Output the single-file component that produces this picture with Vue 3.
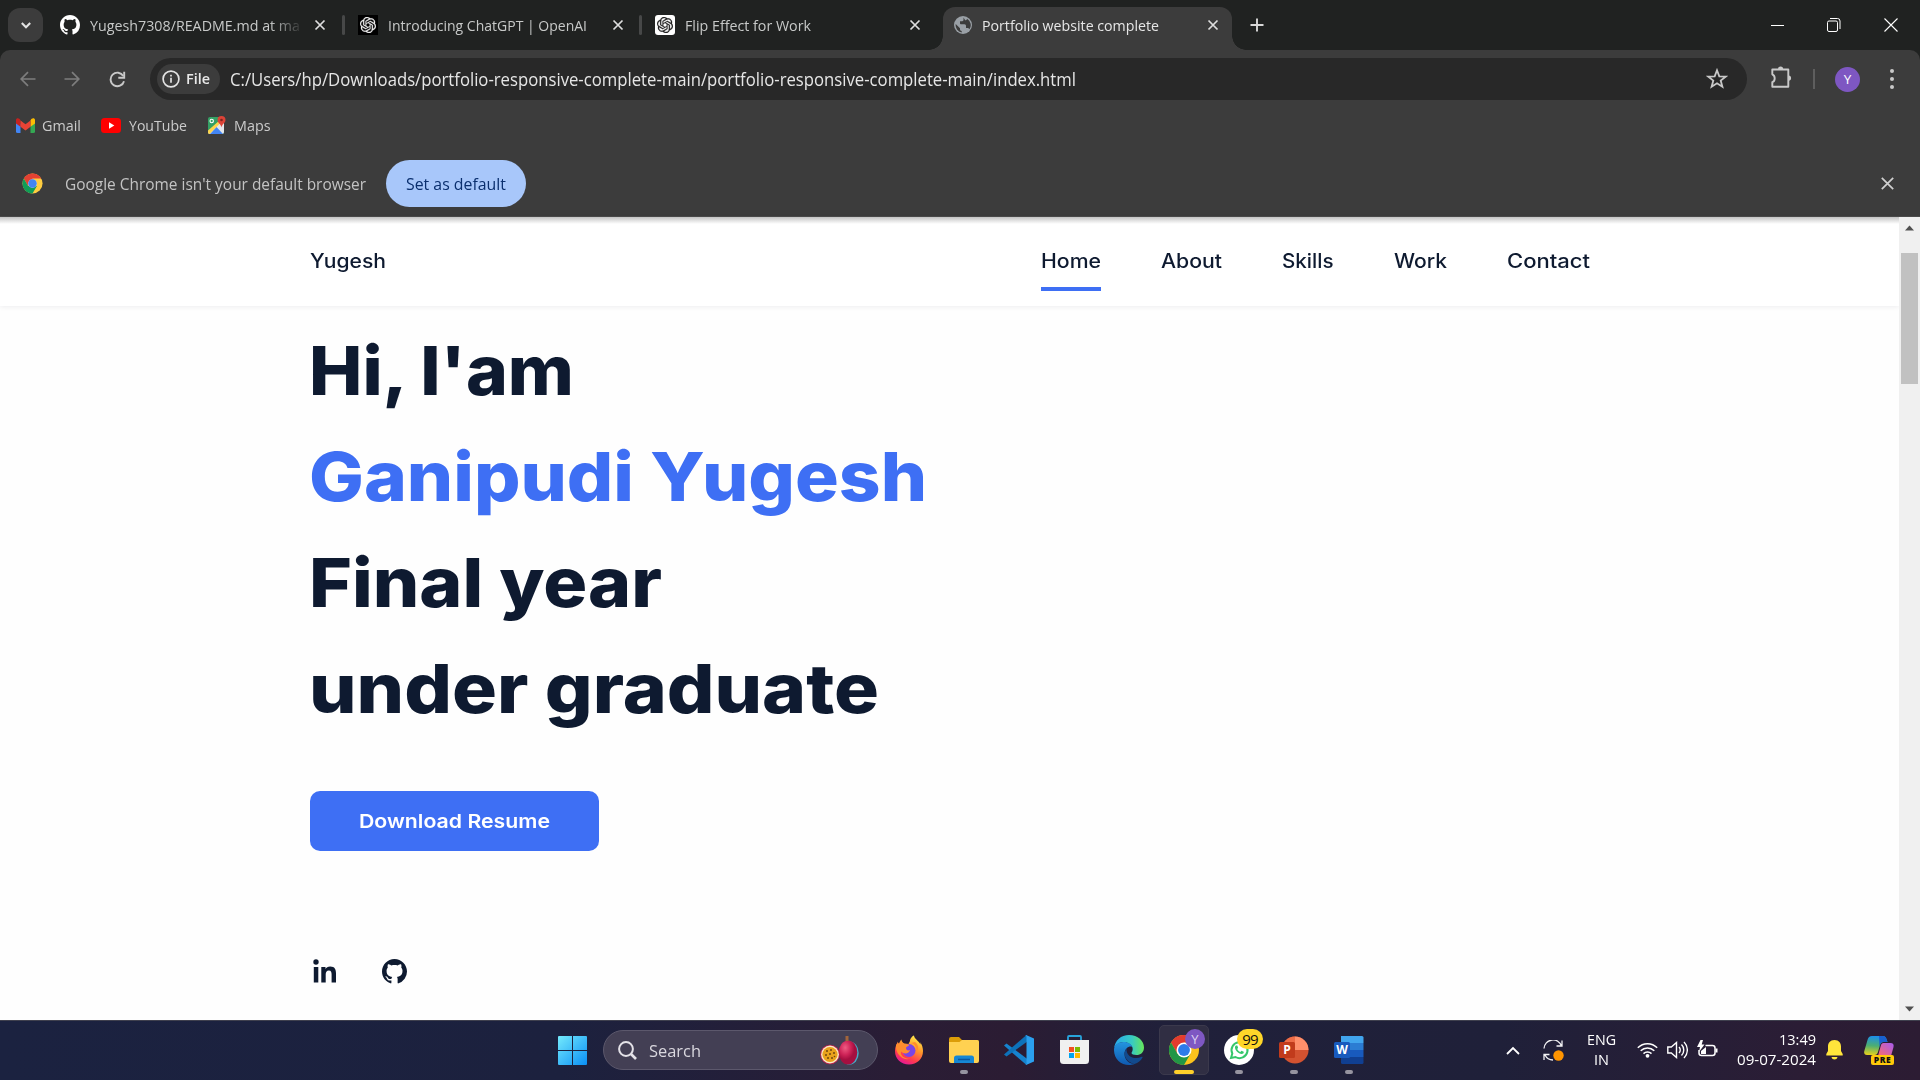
<script setup>
const github =
  'M8 0C3.58 0 0 3.58 0 8c0 3.54 2.29 6.53 5.47 7.59.4.07.55-.17.55-.38 0-.19-.01-.82-.01-1.49-2.01.37-2.53-.49-2.69-.94-.09-.23-.48-.94-.82-1.13-.28-.15-.68-.52-.01-.53.63-.01 1.08.58 1.23.82.72 1.21 1.87.87 2.33.66.07-.52.28-.87.51-1.07-1.78-.2-3.64-.89-3.64-3.95 0-.87.31-1.59.82-2.15-.08-.2-.36-1.02.08-2.12 0 0 .67-.21 2.2.82.64-.18 1.32-.27 2-.27s1.36.09 2 .27c1.53-1.04 2.2-.82 2.2-.82.44 1.1.16 1.92.08 2.12.51.56.82 1.27.82 2.15 0 3.07-1.87 3.75-3.65 3.95.29.25.54.73.54 1.48 0 1.07-.01 1.93-.01 2.2 0 .21.15.46.55.38A8.01 8.01 0 0 0 16 8c0-4.42-3.58-8-8-8z'
const openai =
  'M22.2819 9.8211a5.9847 5.9847 0 0 0-.5157-4.9108 6.0462 6.0462 0 0 0-6.5098-2.9A6.0651 6.0651 0 0 0 4.9807 4.1818a5.9847 5.9847 0 0 0-3.9977 2.9 6.0462 6.0462 0 0 0 .7427 7.0966 5.98 5.98 0 0 0 .511 4.9107 6.051 6.051 0 0 0 6.5146 2.9001A5.9847 5.9847 0 0 0 13.2599 24a6.0557 6.0557 0 0 0 5.7718-4.2058 5.9894 5.9894 0 0 0 3.9977-2.9001 6.0557 6.0557 0 0 0-.7475-7.0729zm-9.022 12.6081a4.4755 4.4755 0 0 1-2.8764-1.0408l.1419-.0804 4.7783-2.7582a.7948.7948 0 0 0 .3927-.6813v-6.7369l2.02 1.1686a.071.071 0 0 1 .038.052v5.5826a4.504 4.504 0 0 1-4.4945 4.4944zm-9.6607-4.1254a4.4708 4.4708 0 0 1-.5346-3.0137l.142.0852 4.783 2.7582a.7712.7712 0 0 0 .7806 0l5.8428-3.3685v2.3324a.0804.0804 0 0 1-.0332.0615L9.74 19.9502a4.4992 4.4992 0 0 1-6.1408-1.6464zM2.3408 7.8956a4.485 4.485 0 0 1 2.3655-1.9728V11.6a.7664.7664 0 0 0 .3879.6765l5.8144 3.3543-2.0201 1.1685a.0757.0757 0 0 1-.071 0l-4.8303-2.7865A4.504 4.504 0 0 1 2.3408 7.872zm16.5963 3.8558L13.1038 8.364 15.1192 7.2a.0757.0757 0 0 1 .071 0l4.8303 2.7913a4.4944 4.4944 0 0 1-.6765 8.1042v-5.6772a.79.79 0 0 0-.407-.667zm2.0107-3.0231l-.142-.0852-4.7735-2.7818a.7759.7759 0 0 0-.7854 0L9.409 9.2297V6.8974a.0662.0662 0 0 1 .0284-.0615l4.8303-2.7866a4.4992 4.4992 0 0 1 6.6802 4.66zM8.3065 12.863l-2.02-1.1638a.0804.0804 0 0 1-.038-.0567V6.0742a4.4992 4.4992 0 0 1 7.3757-3.4537l-.142.0805L8.704 5.459a.7948.7948 0 0 0-.3927.6813zm1.0976-2.3654l2.602-1.4998 2.6069 1.4998v2.9994l-2.5974 1.4997-2.6067-1.4997Z'

const tabs = [
  { title: 'Yugesh7308/README.md at ma', width: 210, icon: 'github', fade: true },
  { title: 'Introducing ChatGPT | OpenAI', width: 199, icon: 'gpt-dark' },
  { title: 'Flip Effect for Work', width: 126, icon: 'gpt-light' },
  { title: 'Portfolio website complete', width: 177, icon: 'globe', active: true },
]
const nav = [
  { label: 'Home', width: 60 },
  { label: 'About', width: 61 },
  { label: 'Skills', width: 51.5 },
  { label: 'Work', width: 53 },
  { label: 'Contact', width: 83 },
]
const headline = [
  { text: "Hi, I'am", width: 265 },
  { text: 'Ganipudi Yugesh', width: 618, accent: true },
  { text: 'Final year', width: 353 },
  { text: 'under graduate', width: 570 },
]

// Stretches a single line of text so that it spans the given width in pixels.
const vSpan = {
  mounted(el, { value }) {
    const range = document.createRange()
    range.selectNodeContents(el)
    const natural = range.getBoundingClientRect().width
    el.style.width = `${value}px`
    el.style.transform = `scaleX(${value / natural})`
  },
}
</script>

<template>
  <div class="screen">
    <div class="tabstrip">
      <div class="tabsearch">
        <svg width="12" height="12" viewBox="0 0 12 12"><path d="M1.800 4l4.200 4.200L10.200 4" fill="none" stroke="#e3e3e3" stroke-width="2.100" /></svg>
      </div>
      <div v-for="(t, i) in tabs" :key="i" class="tab" :class="{ active: t.active, divided: i < 2 }">
        <span class="favicon" :class="t.icon">
          <svg v-if="t.icon === 'github'" width="20" height="20" viewBox="0 0 16 16"><path :d="github" fill="#fff" /></svg>
          <svg v-else-if="t.icon === 'globe'" width="18" height="18" viewBox="0 0 18 18">
            <circle cx="9" cy="9" r="9" fill="#9aa0a6" />
            <path d="M9.5 1.5v2.2c0 1-1 1.5-2 1.5H6v2c0 .8.5 1 1.200 1h3.200c1.200 0 1.600.8 1.600 1.800v2h1.500c.9 0 1.600.6 2 1.300A7.400 7.400 0 0 0 13 2.700c-.2.9-.8 1.600-1.800 1.600zM1.700 8l4.300 4.200v1c0 1 .7 1.700 1.700 1.800v1.500A7.500 7.500 0 0 1 1.700 8z" fill="#3c3c3c" />
          </svg>
          <svg v-else width="16" height="16" viewBox="0 0 24 24"><path :d="openai" fill="currentColor" stroke="currentColor" stroke-width=".4" /></svg>
        </span>
        <span class="tabtitle" :class="{ fade: t.fade }"><span v-span="t.width" class="line">{{ t.title }}</span></span>
        <svg class="tabclose" width="12" height="12" viewBox="0 0 12 12"><path d="M1.500 1.500l9 9M10.500 1.500l-9 9" stroke="#dedede" stroke-width="1.700" /></svg>
      </div>
      <svg class="plus" width="14" height="14" viewBox="0 0 14 14"><path d="M7 .5v13M.5 7h13" stroke="#d8d8d8" stroke-width="1.900" /></svg>
      <div class="winctl">
        <svg width="14" height="14" viewBox="0 0 14 14"><path d="M0 7.500h13" stroke="#fff" /></svg>
        <svg width="14" height="14" viewBox="0 0 14 14" fill="none" stroke="#fff"><rect x=".5" y="3" width="10" height="10.500" rx="1.500" /><path d="M3 .5h7.500a2.500 2.500 0 0 1 2.500 2.500v8" /></svg>
        <svg width="14" height="14" viewBox="0 0 14 14"><path d="M.5.5l13 13M13.500.5l-13 13" stroke="#fff" stroke-width="1.100" /></svg>
      </div>
    </div>

    <div class="chrome">
      <div class="toolbar">
        <svg width="16" height="16" viewBox="0 0 16 16" fill="none" stroke="#7d7d7d" stroke-width="1.700"><path d="M15.500 8H1.500M8 1.200L1.200 8 8 14.800" /></svg>
        <svg width="16" height="16" viewBox="0 0 16 16" fill="none" stroke="#7d7d7d" stroke-width="1.700"><path d="M.5 8h14M8 1.200L14.800 8 8 14.800" /></svg>
        <svg width="17" height="17" viewBox="0 0 17 17"><path d="M14.300 5A6.800 6.800 0 1 0 15 10.200" fill="none" stroke="#c9c9c9" stroke-width="1.900" /><path d="M15.200.8v5.900H9.300" fill="none" stroke="#c9c9c9" stroke-width="1.900" /></svg>
        <div class="omnibox">
          <div class="chip">
            <svg width="18" height="18" viewBox="0 0 18 18"><circle cx="9" cy="9" r="7.900" fill="none" stroke="#e3e3e3" stroke-width="1.700" /><path d="M9 7.800v5M9 4.700v1.800" stroke="#e3e3e3" stroke-width="1.700" /></svg>
            <span v-span="24" class="line">File</span>
          </div>
          <span v-span="846" class="line url">C:/Users/hp/Downloads/portfolio-responsive-complete-main/portfolio-responsive-complete-main/index.html</span>
          <svg class="star" width="22" height="22" viewBox="0 0 22 22"><path d="M11 2.300l2.300 6 6.400.3-5 4 1.700 6.200-5.400-3.500-5.400 3.500 1.700-6.200-5-4 6.400-.3z" fill="none" stroke="#c9c9c9" stroke-width="1.800" /></svg>
        </div>
        <svg class="puzzle" width="22" height="24" viewBox="0 0 22 24"><path d="M2.300 4.500h16v17.200H2.300v-4.500c1.600-.5 2.400-2 2.400-3.900S3.900 10 2.300 9.300z" fill="none" stroke="#c9c9c9" stroke-width="1.900" stroke-linejoin="round" /><path d="M8 4a2.600 2.600 0 0 1 5.200 0zM18.500 10.500a2.600 2.600 0 0 1 0 5.200z" fill="#c9c9c9" /></svg>
        <span class="bar"></span>
        <span class="avatar">Y</span>
        <span class="dots"><i></i><i></i><i></i></span>
      </div>

      <div class="bookmarks">
        <svg width="19" height="15" viewBox="0 0 19 15"><path d="M0 3v10.500Q0 15 1.500 15h3V6z" fill="#4285f4" /><path d="M19 3v10.500q0 1.500-1.500 1.500h-3V6z" fill="#34a853" /><path d="M0 2v3.500l4.500 3.200V2.500C3.500-.5 0-.3 0 2z" fill="#c5221f" /><path d="M19 2v3.500l-4.500 3.200V2.500C15.500-.5 19-.3 19 2z" fill="#fbbc04" /><path d="M4.500 2.500v6.200l5 3.800 5-3.800V2.500l-5 3.800z" fill="#ea4335" /></svg>
        <span v-span="39" class="line gmail">Gmail</span>
        <svg width="20" height="15" viewBox="0 0 20 15"><rect width="20" height="15" rx="3.500" fill="#f00" /><path d="M8 4.300v6.400l5.300-3.200z" fill="#fff" /></svg>
        <span v-span="58" class="line youtube">YouTube</span>
        <svg width="18" height="18" viewBox="0 0 18 18"><rect y="1" width="16" height="17" rx="2" fill="#34a064" /><path d="M0 16L8 9l8-7v14q0 2-2 2H2q-2 0-2-2z" fill="#e4e6ea" /><path d="M2 18l6.500-7 6.500 7z" fill="#4285f4" /><path d="M0 14.500L12 4v3.500L1.500 18Q0 18 0 16z" fill="#fdd44b" /><path d="M13.500 0A4 4 0 0 0 9.500 4c0 3 3.500 3.700 4 7.500.5-3.800 4-4.500 4-7.500a4 4 0 0 0-4-4z" fill="#dc4337" /><circle cx="13.500" cy="4" r="1.300" fill="#7b2520" /><circle cx="3.700" cy="5" r="1.700" fill="none" stroke="#fff" stroke-width="1.100" /></svg>
        <span v-span="36.5" class="line maps">Maps</span>
      </div>

      <div class="infobar">
        <svg width="21" height="21" viewBox="0 0 48 48"><circle cx="24" cy="24" r="23" fill="#ffcd40" /><path d="M4.100 12.500A23 23 0 0 1 43.900 12.500H24L14 29.800z" fill="#e34133" /><path d="M4.100 12.500A23 23 0 0 0 24 47l10-17.300H14z" fill="#109d58" /><circle cx="24" cy="24" r="10" fill="#b9cdf2" /><circle cx="24" cy="24" r="9.500" fill="#4285f4" /></svg>
        <span v-span="301" class="line notice">Google Chrome isn't your default browser</span>
        <div class="setdefault"><span v-span="100" class="line">Set as default</span></div>
        <svg class="infoclose" width="13" height="13" viewBox="0 0 13 13"><path d="M.8.8l11.400 11.400M12.200.8L.8 12.200" stroke="#d0d0d0" stroke-width="1.700" /></svg>
      </div>
    </div>

    <div class="viewport">
      <div class="page">
        <header class="header">
          <span v-span="76" class="line brand">Yugesh</span>
          <nav class="nav">
            <span v-for="(n, i) in nav" :key="n.label" class="navitem" :class="{ current: i === 0 }"><span v-span="n.width" class="line">{{ n.label }}</span></span>
          </nav>
        </header>
        <main class="home">
          <h1 class="title">
            <span v-for="h in headline" :key="h.text" v-span="h.width" class="line" :class="{ accent: h.accent }">{{ h.text }}</span>
          </h1>
          <div class="button"><span v-span="191" class="line">Download Resume</span></div>
          <div class="social">
            <svg width="24" height="24" viewBox="0 0 24 24" fill="#0e1a30"><circle cx="3" cy="3" r="2.700" /><path d="M.8 8h4.500v15.500H.8zM8.300 8h4.200v2.100c.8-1.500 2.300-2.500 4.700-2.500 4.600 0 5.800 2.800 5.800 7v8.900h-4.400v-8c0-2.300-.4-4-2.700-4-2.400 0-3.200 1.700-3.200 4v8H8.300z" /></svg>
            <svg width="25" height="25" viewBox="0 0 16 16"><path :d="github" fill="#0e1a30" /></svg>
          </div>
        </main>
      </div>
      <div class="scroll">
        <svg width="10" height="6" viewBox="0 0 10 6"><path d="M0 5.500L4.500.5 9 5.500z" fill="#505050" /></svg>
        <span class="thumb"></span>
        <svg class="down" width="10" height="6" viewBox="0 0 10 6"><path d="M0 .5h9l-4.500 5z" fill="#505050" /></svg>
      </div>
    </div>

    <div class="taskbar">
      <svg class="start" width="29" height="29" viewBox="0 0 29 29">
        <defs><linearGradient id="win" x1="0" y1="0" x2="1" y2="1" gradientUnits="objectBoundingBox"><stop stop-color="#74eafc" /><stop offset="1" stop-color="#0a8ff5" /></linearGradient></defs>
        <path d="M1 0h13v14H0V1q0-1 1-1zM15 0h13q1 0 1 1v13H15zM0 15h14v14H1q-1 0-1-1zM15 15h14v13q0 1-1 1H15z" fill="url(#win)" />
      </svg>
      <div class="search">
        <svg width="19" height="19" viewBox="0 0 19 19" fill="none" stroke="#e4e2e8" stroke-width="2"><circle cx="8" cy="8" r="6.900" /><path d="M13 13l5 5" stroke-width="2.600" /></svg>
        <span v-span="52" class="line">Search</span>
        <svg class="fruit" width="39" height="30" viewBox="0 0 39 30">
          <defs><radialGradient id="plum" cx=".35" cy=".3"><stop stop-color="#ee5d83" /><stop offset=".6" stop-color="#cf2458" /><stop offset="1" stop-color="#a50f40" /></radialGradient></defs>
          <ellipse cx="29.500" cy="18" rx="9.200" ry="11.500" fill="#48a9c7" /><ellipse cx="28" cy="17.500" rx="9.300" ry="12" fill="url(#plum)" /><path d="M25.500 1h3v5h-3z" fill="#a3653b" />
          <circle cx="10" cy="19.500" r="9.800" fill="#b8234c" /><circle cx="10" cy="19.500" r="8.900" fill="#fae9ca" /><circle cx="10" cy="19.500" r="7.600" fill="#e9a21c" />
          <g fill="#70460f"><circle cx="7" cy="16" r="1" /><circle cx="11" cy="15" r="1" /><circle cx="14" cy="18" r="1" /><circle cx="10" cy="19" r="1" /><circle cx="6" cy="20" r="1" /><circle cx="8" cy="23" r="1" /><circle cx="12" cy="23" r="1" /><circle cx="14.500" cy="21.500" r=".8" /></g>
        </svg>
      </div>
      <div class="apps">
        <div class="app">
          <svg width="30" height="30" viewBox="0 0 30 30">
            <defs><linearGradient id="fox" x1=".8" y1="0" x2=".3" y2="1"><stop stop-color="#fff44f" /><stop offset=".4" stop-color="#ff9a2a" /><stop offset=".75" stop-color="#ff3a4e" /><stop offset="1" stop-color="#e3169b" /></linearGradient></defs>
            <path d="M15 29.500C7 29.500 1 24 1 16c0-4 1.500-7 3-9.500 0 1 .4 2 1 2.500.5-2 1.500-3.500 2.500-4.500 0 2 1.500 3.500 3 4l4 .5 1.500-3C16 4 18 1 20 .5c0 3 5 5.500 6.500 9 0-1 0-1.500-.5-2.500 2 2.500 3 6 3 9 0 8-6 13.500-14 13.500z" fill="url(#fox)" />
            <circle cx="15" cy="15.500" r="6.500" fill="#7a45e5" /><path d="M2 10c3-3 7-1 8.500-1 2 0 4 0 4.500 1s-3 1.500-3 3c0 2 2 3 4 2-1 4-6 4.500-9 1.500-1 4 4 8 9 7-7 3-15-5-14-13.500zM17 8c4 1 6.500 5 5 10 3-3 3-8-1-11z" fill="#ff8d2e" />
          </svg>
        </div>
        <div class="app">
          <svg width="30" height="28" viewBox="0 0 30 28"><path d="M0 3q0-2 2-2h8l3 3h15q2 0 2 2v4H0z" fill="#dc9d08" /><path d="M0 6h10.500L13 4h15q2 0 2 2v19q0 2-2 2H2q-2 0-2-2z" fill="#ffd151" /><path d="M5 27v-5q0-2.500 2.500-2.500h15Q25 19.500 25 22v5z" fill="#1687d4" /><path d="M9 23.500h12" stroke="#0b579f" stroke-width="1.500" /></svg>
          <i class="run"></i>
        </div>
        <div class="app">
          <svg width="30" height="30" viewBox="0 0 30 30"><path d="M0 10.500L2.500 8.500 24 24.500 22.500 30z" fill="#1683ce" /><path d="M0 19.500l2.500 2L24 6 22.500 0z" fill="#0d72ba" /><path d="M22 0l8 3.500v23L22 30l-.5-.5q1 .2 1-1V2q0-1.500-1-1z" fill="#2ba0ee" /></svg>
        </div>
        <div class="app">
          <svg width="29" height="30" viewBox="0 0 29 30"><path d="M8 7V2q0-1 1-1h11q1 0 1 1v5" fill="none" stroke="#28a4dc" stroke-width="1.800" /><path d="M0 5h29v20.500q0 3.500-3.500 3.500h-22Q0 29 0 25.500z" fill="#f0f0f0" /><path d="M9 12h5v5H9z" fill="#f25022" /><path d="M15 12h5v5h-5z" fill="#7fba00" /><path d="M9 18h5v5H9z" fill="#00a4ef" /><path d="M15 18h5v5h-5z" fill="#ffb900" /></svg>
        </div>
        <div class="app">
          <svg width="30" height="30" viewBox="0 0 30 30">
            <defs><linearGradient id="edgeTop" x1="0" x2="1"><stop stop-color="#27a8ec" /><stop offset=".6" stop-color="#38cbc2" /><stop offset="1" stop-color="#67e659" /></linearGradient><linearGradient id="edgeLow" x1="0" y1="0" x2="0" y2="1"><stop stop-color="#2395df" /><stop offset="1" stop-color="#0f59b0" /></linearGradient></defs>
            <path d="M0 14C1 5 7 0 15 0c9 0 15 6 15 12.500 0 5-3.500 7.500-7.500 7.500-3 0-5-1-5-2 0-.8 1.200-1.500 1.200-4C18.700 10 14 7 9.500 7 4 7 .5 11 0 14z" fill="url(#edgeTop)" />
            <path d="M0 15C0 10 4 7 9.500 7c5 0 8 2.500 9 5-3-1.500-8 1-8 7 0 6 5 10 10 10-2 .7-4 1-5.500 1C7 30 0 24 0 15z" fill="url(#edgeLow)" />
            <path d="M12.500 13.500c-5 7 1 14 8 15.500 3.500-1 6.500-3.500 8-6.500.3-.7-.3-1-.8-.7C21 25 12 22 12.500 13.500z" fill="#124a8d" />
          </svg>
        </div>
        <div class="app focused">
          <svg width="30" height="30" viewBox="0 0 48 48"><circle cx="24" cy="24" r="24" fill="#fcc31c" /><path d="M3.200 12A24 24 0 0 1 44.800 12H24L13.600 30z" fill="#e33b2e" /><path d="M3.200 12A24 24 0 0 0 24 48l10.400-18H13.600z" fill="#229646" /><circle cx="24" cy="24" r="12" fill="#fff" /><circle cx="24" cy="24" r="9.500" fill="#2d7bea" /></svg>
          <span class="profile">Y</span>
          <i class="run"></i>
        </div>
        <div class="app">
          <svg width="30" height="30" viewBox="0 0 30 30"><circle cx="15" cy="15" r="15" fill="#fff" /><path d="M7 23l1.300-4.500A8 8 0 1 1 11.500 22z" fill="none" stroke="#35c76a" stroke-width="2" /><path d="M12 10.500c-1 .5-1.500 2-.5 4 1.200 2.500 3.500 4.300 6 4.500 1.500 0 2.500-1 2.200-2.300l-2.200-1-1.200 1.200c-1.500-.6-2.500-1.800-3-3l.8-1.100-.8-2.200z" fill="#35c76a" /></svg>
          <span class="count">99</span>
          <i class="run"></i>
        </div>
        <div class="app">
          <svg width="30" height="28" viewBox="0 0 30 28"><circle cx="16" cy="14" r="13.500" fill="#d35230" /><path d="M16 .5A13.500 13.500 0 0 0 2.500 14H16z" fill="#ed6c47" /><path d="M16 .5A13.500 13.500 0 0 1 29.500 14H16z" fill="#ff8f6b" /><rect y="6" width="16" height="16" rx="1.500" fill="#c13b1c" /><text x="8" y="18.200" text-anchor="middle" font-family="Open Sans, sans-serif" font-size="12" font-weight="700" fill="#fff">P</text></svg>
          <i class="run"></i>
        </div>
        <div class="app">
          <svg width="30" height="28" viewBox="0 0 30 28"><path d="M7 0h21q1.500 0 1.500 1.500V7H7z" fill="#41a5ee" /><path d="M7 7h22.500v7H7z" fill="#2b7cd3" /><path d="M7 14h22.500v7H7z" fill="#185abd" /><path d="M7 21h22.500v5.500Q29.500 28 28 28H8.500Q7 28 7 26.500z" fill="#103f91" /><rect y="6" width="16" height="16" rx="1.500" fill="#185abd" /><text x="8" y="18.200" text-anchor="middle" font-family="Open Sans, sans-serif" font-size="12" font-weight="700" fill="#fff">W</text></svg>
          <i class="run"></i>
        </div>
      </div>

      <div class="tray">
        <svg width="14" height="9" viewBox="0 0 14 9"><path d="M1 8l6-6 6 6" fill="none" stroke="#fff" stroke-width="1.800" /></svg>
        <svg class="sync" width="21" height="21" viewBox="0 0 21 21" fill="none" stroke="#f2f2f4" stroke-width="1.300"><path d="M1 8.500A9 9 0 0 1 18.500 6M19 .5V6h-5.500M1 20v-5.500h5.500M2 15a9 9 0 0 0 8 5" /><circle cx="15.500" cy="15.500" r="5.200" fill="#ff9500" stroke="none" /></svg>
        <div class="lang"><span v-span="29" class="line">ENG</span><span v-span="15" class="line">IN</span></div>
        <svg class="wifi" width="21" height="16" viewBox="0 0 21 16" fill="none" stroke="#fff" stroke-width="1.500"><path d="M.8 5.800a13.700 13.700 0 0 1 19.400 0M3.700 8.800a9.600 9.600 0 0 1 13.600 0M6.500 11.600a5.700 5.700 0 0 1 8 0" /><circle cx="10.500" cy="13.800" r="1.900" fill="#fff" stroke="none" /></svg>
        <svg class="vol" width="21" height="18" viewBox="0 0 21 18" fill="none" stroke="#fff" stroke-width="1.400"><path d="M.8 6h3.500L9.500 1.500v15L4.300 12H.8zM12 6a4.200 4.200 0 0 1 0 6M14.500 3.500a7.800 7.800 0 0 1 0 11M17 1a11.300 11.300 0 0 1 0 16" /></svg>
        <svg class="bat" width="22" height="18" viewBox="0 0 22 18"><path d="M8.500 5.500h7q2.500 0 2.500 2.500v5q0 2.500-2.500 2.500h-11Q2 15.500 2 13v-3" fill="none" stroke="#fff" stroke-width="1.500" /><path d="M18.500 8.500h2v4h-2z" fill="#fff" /><path d="M4 14v-3l5-4v7zM3.500 0L0 7h3l-1 5 5.500-7.500H4.700L6 0z" fill="#fff" /></svg>
        <div class="clock"><span v-span="37" class="line">13:49</span><span v-span="79" class="line">09-07-2024</span></div>
        <svg class="bell" width="17" height="20" viewBox="0 0 17 20"><path d="M8.500 0C4 0 2 3 2 6.500V11L.3 14v1.500h16.400V14L15 11V6.500C15 3 13 0 8.500 0zM5.500 17h6c-.5 1.800-1.500 2.500-3 2.500s-2.500-.7-3-2.500z" fill="#ffe53b" /></svg>
        <div class="copilot">
          <svg width="30" height="22" viewBox="0 0 30 22">
            <defs><linearGradient id="cpA" x1=".3" y1="0" x2=".2" y2="1"><stop stop-color="#1c8fe8" /><stop offset=".5" stop-color="#4cae72" /><stop offset="1" stop-color="#e8d21c" /></linearGradient><linearGradient id="cpB" x1="1" y1="0" x2="0" y2="1"><stop stop-color="#a65bf0" /><stop offset="1" stop-color="#fb6a6c" /></linearGradient></defs>
            <path d="M8 0h11c2 0 3 1.500 3.500 3l1 3h-4c-2 0-3 1-3.500 3l-2 7c-.6 2-1.500 3-3.500 3H3c-2.500 0-3.300-2-2.700-4L3.500 4C4.200 1.500 5.500 0 8 0z" fill="url(#cpA)" /><path d="M15 0h4c2 0 3 1.500 3.500 3l1 3h-4c-2 0-3 1-3.500 3l-.5 2z" fill="#1860cf" /><path d="M19.500 7h7c2.500 0 3.500 1.500 3 4l-2.500 9H14l3-11c.4-1.300 1.200-2 2.500-2z" fill="url(#cpB)" />
          </svg>
          <span class="pre">PRE</span>
        </div>
      </div>
    </div>
  </div>
</template>

<style>
body { margin: 0; overflow: hidden; }
</style>

<style scoped>
* { box-sizing: border-box; }
svg { display: block; flex: none; }
.screen { width: 1920px; height: 1080px; display: flex; flex-direction: column; overflow: hidden; background: #202221; font-family: "Open Sans", "Noto Sans", sans-serif; }
.line { display: block; white-space: nowrap; flex: none; transform-origin: left center; }

.tabstrip { height: 50px; flex: none; display: flex; align-items: center; background: #202221; padding-left: 8px; }
.tabsearch { width: 35px; height: 34px; border-radius: 12px; background: #3c3c3c; display: flex; align-items: center; justify-content: center; }
.tab { position: relative; width: 297.5px; height: 43px; margin-top: 7px; display: flex; align-items: center; padding: 0 12px 7px 17px; color: #c7c9c8; font-size: 14.8px; }
.tab.divided::after { content: ""; position: absolute; right: -4px; top: 8px; width: 3px; height: 20px; border-radius: 2px; background: #474848; }
.tab.active { width: 289px; margin-left: 7.5px; padding-left: 11px; background: #3c3c3c; border-radius: 12px 12px 0 0; color: #e6e6e6; }
.tab.active::before, .tab.active::after { content: ""; position: absolute; bottom: 0; width: 14px; height: 14px; }
.tab.active::before { left: -14px; background: radial-gradient(circle at 0 0, transparent 13.5px, #3c3c3c 14px); }
.tab.active::after { right: -14px; background: radial-gradient(circle at 100% 0, transparent 13.5px, #3c3c3c 14px); }
.favicon { width: 20px; height: 20px; flex: none; display: flex; align-items: center; justify-content: center; }
.gpt-dark { background: #000; color: #eee; }
.gpt-light { background: #fff; color: #222; border-radius: 3px; }
.globe { width: 18px; }
.tabtitle { width: 217px; margin-left: 10px; overflow: hidden; height: 22px; line-height: 22px; flex: none; }
.tab.active .tabtitle { width: 218px; }
.fade { -webkit-mask-image: linear-gradient(90deg, #000 180px, transparent 214px); mask-image: linear-gradient(90deg, #000 180px, transparent 214px); }
.tabclose { margin-left: 7px; }
.plus { margin-left: 18px; }
.winctl { margin-left: auto; display: flex; gap: 42.5px; margin-right: 22px; }
.winctl svg:nth-child(2) { margin: 0 .5px 0 -.5px; }

.chrome { height: 167px; flex: none; display: flex; flex-direction: column; background: #3c3c3c; border-radius: 10px 10px 0 0; border-bottom: 1px solid #4b4b4b; }
.toolbar { height: 58px; flex: none; display: flex; align-items: center; padding-left: 20px; }
.toolbar > svg:nth-child(2) { margin-left: 28px; }
.toolbar > svg:nth-child(3) { margin-left: 29px; }
.omnibox { width: 1597px; height: 42px; margin-left: 24px; border-radius: 21px; background: #282828; display: flex; align-items: center; padding-left: 7px; }
.chip { width: 63px; height: 30px; border-radius: 15px; background: #3c3c3c; display: flex; align-items: center; padding-left: 5px; gap: 6px; color: #e8e8e8; font-size: 14.5px; line-height: 28px; font-weight: 600; }
.url { margin: 2px 0 0 10px; font-size: 17.3px; line-height: 24px; color: #e6e6e6; }
.star { margin-left: auto; margin-right: 19px; }
.puzzle { margin: -4px 0 0 23px; }
.bar { width: 2px; height: 20px; background: #5e5e5e; margin-left: 21px; }
.avatar { width: 25px; height: 25px; border-radius: 50%; background: #7e57c2; color: #fff; font-size: 13.5px; line-height: 25px; text-align: center; margin-left: 20px; }
.dots { display: flex; flex-direction: column; gap: 4px; margin-left: 30px; }
.dots i { width: 4px; height: 4px; border-radius: 50%; background: #c9c9c9; }
.bookmarks { height: 34px; flex: none; display: flex; align-items: center; padding-left: 16px; font-size: 14.8px; color: #cbcbcb; }
.gmail { margin: 0 20px 0 7px; }
.youtube { margin: 0 21px 0 8px; }
.maps { margin-left: 8px; }
.infobar { height: 74px; flex: none; padding: 8px 26px 0 22px; display: flex; align-items: center; font-size: 15.8px; color: #c3c3c3; }
.notice { margin: 2px 0 0 22px; }
.setdefault { margin-left: 20px; width: 140px; height: 47px; padding-top: 2px; border-radius: 24px; background: #a8c7fa; color: #0a2f6e; display: flex; align-items: center; justify-content: center; }
.infoclose { margin-left: auto; }

.viewport { position: relative; height: 803px; flex: none; display: flex; background: #fefefe; }
.viewport::before { content: ""; position: absolute; left: 0; top: 0; width: 1899px; height: 7px; background: linear-gradient(#c4c4c4, rgba(255, 255, 255, 0)); z-index: 1; }
.page { width: 1899px; font-family: "Inter", "Open Sans", sans-serif; color: #0e1a30; }
.header { height: 89px; background: #fff; box-shadow: 0 1px 5px rgba(20, 20, 40, .07); padding: 0 309.5px 2px 309.5px; display: flex; align-items: center; justify-content: space-between; font-size: 19.5px; font-weight: 500; }
.nav { display: flex; gap: 60px; }
.navitem { position: relative; height: 60px; display: flex; align-items: center; }
.current::after { content: ""; position: absolute; left: 0; bottom: 0; width: 60px; height: 4px; background: #3e6ff4; }
.home { padding: 11px 0 0 309px; }
.title { margin: 0; font-size: 68px; font-weight: 800; line-height: 106px; }
.accent { color: #3e6ff4; }
.button { margin: 50px 0 0 1px; width: 289px; height: 60px; border-radius: 10px; background: #3e6ff4; color: #fff; display: flex; align-items: center; justify-content: center; font-size: 19.3px; font-weight: 600; }
.social { margin: 107.5px 0 0 4px; display: flex; gap: 45px; }
.scroll { width: 21px; background: #f0f0f0; padding-top: 8px; display: flex; flex-direction: column; align-items: center; }
.thumb { width: 17px; height: 131px; margin-top: 22px; background: #c1c1c1; }
.down { margin-top: auto; margin-bottom: 8px; }

.taskbar { height: 60px; flex: none; border-top: 1px solid #3f404e; padding-bottom: 1px; display: flex; align-items: center; background: linear-gradient(90deg, #1b2240 0, #1c213e 560px, #2a1d35 900px, #2b1c33 1010px, #20203a 1160px, #1f2039 1500px, #2b1d35 1800px, #2c1c33 1920px); color: #fff; }
.start { margin-left: 558px; }
.search { margin-left: 16px; width: 275px; height: 40px; border-radius: 20px; background: #433f54; border: 1px solid #5c586c; display: flex; align-items: center; padding: 0 18px 0 14px; gap: 12px; font-size: 16.8px; color: #d9d7de; }
.fruit { margin-left: auto; }
.apps { display: flex; gap: 5px; margin-left: 6px; }
.app { position: relative; width: 50px; height: 50px; border-radius: 5px; display: flex; align-items: center; justify-content: center; }
.focused { background: #302e43; border: 1px solid #3b394c; }
.run { position: absolute; bottom: 1px; left: 21px; width: 8px; height: 4px; border-radius: 2px; background: #9694a0; }
.focused .run { left: 14px; bottom: 0; width: 20px; background: #ffd02b; }
.profile { position: absolute; left: 25px; top: 3px; width: 20px; height: 20px; border-radius: 50%; background: #7e57c2; color: #ddd0f2; font-size: 13px; line-height: 20px; text-align: center; }
.count { position: absolute; left: 23px; top: 4px; width: 26px; height: 20px; border-radius: 10px; background: #ffd629; color: #111; font-size: 15px; line-height: 20px; text-align: center; letter-spacing: -.8px; }
.tray { margin-left: 132px; display: flex; align-items: center; font-size: 14.8px; line-height: 20px; }
.sync { margin-left: 23px; }
.lang { width: 30px; margin: -2px 0 0 22px; display: flex; flex-direction: column; align-items: center; }
.wifi { margin-left: 21px; }
.vol { margin-left: 9px; }
.bat { margin-left: 9px; margin-top: -2px; }
.clock { width: 80px; margin: -2px 0 0 17px; display: flex; flex-direction: column; align-items: flex-end; }
.bell { margin-left: 10px; }
.copilot { position: relative; width: 30px; height: 29px; margin-left: 21px; }
.pre { position: absolute; left: 7px; top: 19px; width: 23px; height: 10px; border-radius: 2px; background: #ffc90a; color: #111; font-size: 8.5px; font-weight: 800; line-height: 10px; text-align: center; letter-spacing: .5px; }
</style>
